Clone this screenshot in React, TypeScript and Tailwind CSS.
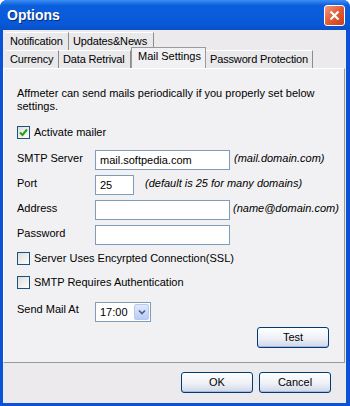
import React from "react";

const font = { fontFamily: '"Liberation Sans", Arial, sans-serif' };

function Tab({ label, w, active }: { label: string; w: number; active?: boolean }) {
  if (active) {
    return (
      <div
        className="relative z-10 -mb-px h-[21px] -mt-[3px] whitespace-nowrap border border-b-0 border-[#9a9a9a] bg-[#f1f0f2] pl-[6px] pt-[2px] text-[#000]"
        style={{ width: w }}
      >
        {label}
      </div>
    );
  }
  return (
    <div
      className="h-[18px] whitespace-nowrap border-t border-t-white border-r border-r-[#8c8c8c] bg-[#e9e8ea] pl-[4px] pt-[2px] tracking-[-0.15px]"
      style={{ width: w }}
    >
      {label}
    </div>
  );
}

function CheckBox({ checked }: { checked?: boolean }) {
  return (
    <div className="flex h-[13px] w-[13px] items-center justify-center border border-[#1c5180] bg-[linear-gradient(135deg,#dcdcd7,#ffffff)]">
      {checked && (
        <svg width="9" height="9" viewBox="0 0 9 9">
          <path d="M1 4.5 L3.5 7 L8 1.5" stroke="#21a121" strokeWidth="2" fill="none" />
        </svg>
      )}
    </div>
  );
}

function XpButton({ label, className }: { label: string; className?: string }) {
  return (
    <button
      className={
        "flex h-[21px] w-[72px] items-center justify-center rounded-[3px] border border-[#003c74] bg-[linear-gradient(#ffffff,#eef0f6_55%,#cdd6ea)] text-[11px] text-black shadow-[inset_0_-1px_0_#a9b8dc] " +
        (className || "")
      }
    >
      {label}
    </button>
  );
}

function Field({
  label,
  value,
  w,
  hint,
  hintGap,
  className,
}: {
  label: string;
  value?: string;
  w: number;
  hint?: string;
  hintGap?: number;
  className?: string;
}) {
  return (
    <div className={"flex items-start " + (className || "")}>
      <div className="w-[78px] pt-[2px]">{label}</div>
      <div
        className="h-[20px] border border-[#7f9db9] bg-white pl-[4px] leading-[18px]"
        style={{ width: w }}
      >
        {value}
      </div>
      {hint && (
        <div className="whitespace-nowrap pt-[2px] italic" style={{ marginLeft: hintGap ?? 4 }}>
          {hint}
        </div>
      )}
    </div>
  );
}

export default function App() {
  return (
    <div
      className="flex h-[406px] w-[350px] flex-col overflow-hidden rounded-t-[7px] bg-[#0a53d6] text-[11px] leading-[13px] text-black"
      style={font}
    >
      {/* title bar */}
      <div className="flex h-[30px] shrink-0 items-center justify-between bg-[linear-gradient(#3d8ef5,#0a5fdd_18%,#0858d8_80%,#0a4fc6)] pl-[7px] pr-[5px]">
        <span className="text-[14px] font-bold text-white [text-shadow:1px_1px_0_#0a2a7a]">Options</span>
        <div className="flex h-[21px] w-[21px] items-center justify-center rounded-[3px] border border-white bg-[linear-gradient(135deg,#f29a7c,#e35a35_50%,#c8401c)]">
          <svg width="11" height="11" viewBox="0 0 11 11">
            <path d="M1.5 1.5 L9.5 9.5 M9.5 1.5 L1.5 9.5" stroke="white" strokeWidth="2.2" />
          </svg>
        </div>
      </div>

      {/* body */}
      <div className="ml-[3px] mr-[4px] mb-[3px] flex flex-1 flex-col bg-[#eceaec]">
        {/* tabs */}
        <div className="mt-[2px] flex pl-[3px]">
          <Tab label="Notification" w={63} />
          <Tab label="Updates&News" w={85} />
        </div>
        <div className="flex pl-[3px]">
          <Tab label="Currency" w={53} />
          <Tab label="Data Retrival" w={72} />
          <Tab label="Mail Settings" w={75} active />
          <Tab label="Password Protection" w={107} />
        </div>

        {/* panel */}
        <div className="mr-px h-[295px] border border-t-white border-l-white border-r-[#9a9a9a] border-b-[#9a9a9a] bg-[#f1f0f2] pl-[13px] pt-[18px]">
          <p>
            Affmeter can send mails periodically if you properly set below
            <br />
            settings.
          </p>

          <div className="mt-[13px] flex items-center gap-[4px]">
            <CheckBox checked />
            <span>Activate mailer</span>
          </div>

          <Field className="mt-[11px]" label="SMTP Server" value="mail.softpedia.com" w={135} hint="(mail.domain.com)" />
          <Field className="mt-[5px]" label="Port" value="25" w={39} hint="(default is 25 for many domains)" hintGap={11} />
          <Field className="mt-[5px]" label="Address" w={135} hint="(name@domain.com)" hintGap={3} />
          <Field className="mt-[5px]" label="Password" w={135} />

          <div className="mt-[7px] flex items-center gap-[4px]">
            <CheckBox />
            <span>Server Uses Encyrpted Connection(SSL)</span>
          </div>
          <div className="mt-[11px] flex items-center gap-[4px]">
            <CheckBox />
            <span>SMTP Requires Authentication</span>
          </div>

          <div className="mt-[13px] flex items-start">
            <div className="w-[78px] pt-[1px]">Send Mail At</div>
            <div className="flex h-[20px] w-[56px] items-center border border-[#7f9db9] bg-white pl-[4px]">
              <span className="flex-1">17:00</span>
              <div className="mr-px flex h-[16px] w-[15px] items-center justify-center rounded-[2px] border border-[#b8c9ef] bg-[linear-gradient(#e0e9fd,#b9cdf6)]">
                <svg width="8" height="6" viewBox="0 0 8 6">
                  <path d="M1 1.5 L4 4.5 L7 1.5" stroke="#4d6185" strokeWidth="1.6" fill="none" />
                </svg>
              </div>
            </div>
          </div>

          <div className="mt-[5px] flex justify-end pr-[15px]">
            <XpButton label="Test" />
          </div>
        </div>

        {/* footer */}
        <div className="mt-[9px] flex justify-end gap-[6px] pr-[15px]">
          <XpButton label="OK" />
          <XpButton label="Cancel" />
        </div>
      </div>
    </div>
  );
}
